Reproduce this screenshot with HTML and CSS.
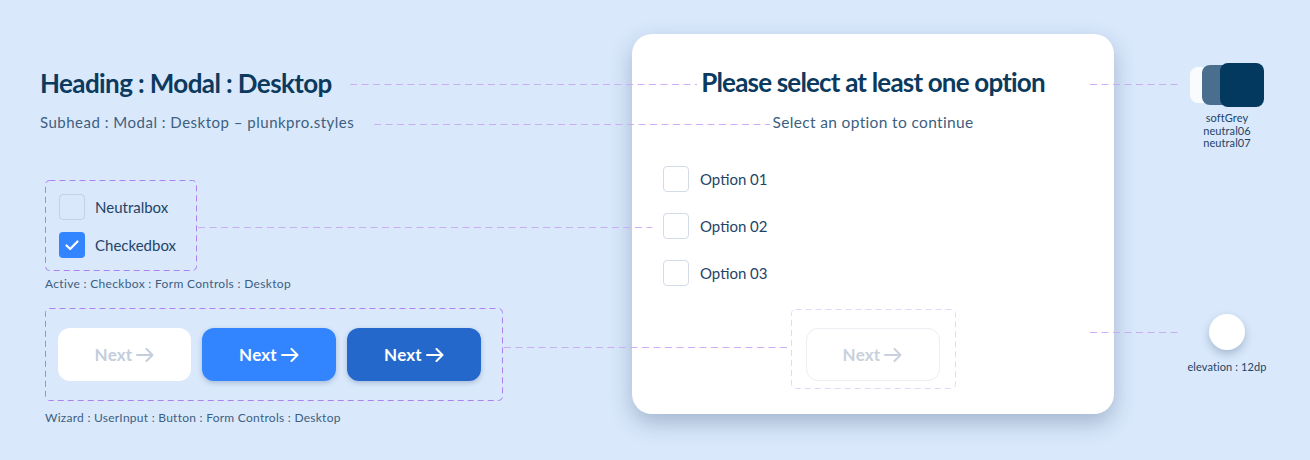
FILE: index.html
```html
<!DOCTYPE html>
<html lang="en">
<head>
<meta charset="utf-8">
<title>Modal : Desktop</title>
<link rel="stylesheet" href="styles.css">
</head>
<body>
<div class="canvas">
  <section class="left">
    <h1 class="heading">Heading : Modal : Desktop</h1>
    <p class="subhead">Subhead : Modal : Desktop – plunkpro.styles</p>

    <div class="group group-checks">
      <svg class="frame" width="152" height="91"><rect x="0.5" y="0.5" width="151" height="90" rx="4"/></svg>
      <div class="check-row"><span class="box"></span><span class="check-label">Neutralbox</span></div>
      <div class="check-row"><span class="box box-checked"><svg width="26" height="26" viewBox="0 0 26 26"><polyline points="7.5,13.5 11.2,17 18.5,9.5"/></svg></span><span class="check-label">Checkedbox</span></div>
    </div>
    <p class="caption caption-checks">Active : Checkbox : Form Controls : Desktop</p>

    <div class="group group-buttons">
      <svg class="frame" width="458" height="93"><rect x="0.5" y="0.5" width="457" height="92" rx="4"/></svg>
      <button class="btn btn-disabled">Next<svg class="arrow" width="18" height="14" viewBox="0 0 18 14"><path d="M1 7H16.5M10.5 1L16.5 7L10.5 13"/></svg></button>
      <button class="btn btn-primary">Next<svg class="arrow" width="18" height="14" viewBox="0 0 18 14"><path d="M1 7H16.5M10.5 1L16.5 7L10.5 13"/></svg></button>
      <button class="btn btn-pressed">Next<svg class="arrow" width="18" height="14" viewBox="0 0 18 14"><path d="M1 7H16.5M10.5 1L16.5 7L10.5 13"/></svg></button>
    </div>
    <p class="caption caption-buttons">Wizard : UserInput : Button : Form Controls : Desktop</p>
  </section>

  <section class="modal">
    <h2 class="modal-title">Please select at least one option</h2>
    <p class="modal-sub">Select an option to continue</p>
    <ul class="options">
      <li class="option"><span class="box box-light"></span><span class="option-label">Option 01</span></li>
      <li class="option"><span class="box box-light"></span><span class="option-label">Option 02</span></li>
      <li class="option"><span class="box box-light"></span><span class="option-label">Option 03</span></li>
    </ul>
    <div class="group group-faint">
      <svg class="frame frame-faint" width="165" height="80"><rect x="0.5" y="0.5" width="164" height="79" rx="4"/></svg>
      <button class="btn btn-ghost">Next<svg class="arrow" width="18" height="14" viewBox="0 0 18 14"><path d="M1 7H16.5M10.5 1L16.5 7L10.5 13"/></svg></button>
    </div>
  </section>

  <section class="right">
    <div class="swatches">
      <span class="swatch swatch-soft"></span>
      <span class="swatch swatch-n06"></span>
      <span class="swatch swatch-n07"></span>
    </div>
    <p class="tokens">softGrey<br>neutral06<br>neutral07</p>
    <span class="elevation"></span>
    <p class="tokens tokens-elev">elevation : 12dp</p>
  </section>

  <svg class="connectors" width="1310" height="460">
    <line x1="350" y1="84.5" x2="697" y2="84.5"/>
    <line x1="1090" y1="84.5" x2="1178" y2="84.5"/>
    <line x1="374" y1="124.5" x2="770" y2="124.5"/>
    <line x1="198" y1="227.5" x2="652" y2="227.5"/>
    <line x1="504" y1="347.5" x2="791" y2="347.5"/>
    <line x1="1090" y1="332.5" x2="1178" y2="332.5"/>
  </svg>
</div>
</body>
</html>
```

FILE: styles.css
```css
* { box-sizing: border-box; }

body {
  margin: 0;
  background: #d9e8fb;
  font-family: Lato, "Noto Sans", sans-serif;
  color: #0c3a5f;
}

.canvas {
  position: relative;
  width: 1310px;
  height: 460px;
  display: flex;
  overflow: hidden;
}

/* ---------- left column ---------- */
.left {
  width: 632px;
  padding: 69px 0 0 40px;
}

.heading {
  margin: 0;
  font-size: 26px;
  line-height: 28px;
  font-weight: 700;
  letter-spacing: -0.6px;
  color: #0b3a5e;
}

.subhead {
  margin: 16px 0 0;
  font-size: 15px;
  line-height: 18px;
  letter-spacing: 0.5px;
  color: #3d5f80;
}

.group { position: relative; }

.frame {
  position: absolute;
  left: 0;
  top: 0;
  pointer-events: none;
}
.frame rect {
  fill: none;
  stroke: #ad82f0;
  stroke-width: 1;
  stroke-dasharray: 6 4;
}
.frame-faint rect { stroke: #e4d6fb; }

.group-checks {
  margin: 49px 0 0 5px;
  width: 152px;
  height: 91px;
  padding: 14px 0 0 14px;
  display: flex;
  flex-direction: column;
  gap: 12px;
}

.check-row {
  display: flex;
  align-items: center;
  gap: 10px;
  height: 26px;
}

.box {
  flex: none;
  width: 26px;
  height: 26px;
  border: 1px solid #c5d2e3;
  border-radius: 4px;
}
.box-checked {
  border: none;
  background: #3385ff;
}
.box-checked svg { display: block; }
.box-checked polyline {
  fill: none;
  stroke: #fff;
  stroke-width: 2.2;
  stroke-linecap: round;
  stroke-linejoin: round;
}
.box-light { border-color: #d3dbe6; background: #fff; }

.check-label {
  font-size: 15px;
  color: #1f4466;
}

.caption {
  margin: 0;
  font-size: 12px;
  line-height: 16px;
  letter-spacing: 0.32px;
  color: #3d5f80;
}
.caption-checks { margin-top: 5px; margin-left: 5px; }
.caption-buttons { margin-top: 9px; margin-left: 5px; letter-spacing: 0.26px; }

.group-buttons {
  margin: 16px 0 0 5px;
  width: 458px;
  height: 93px;
  padding: 20px 0 0 13px;
  display: flex;
  gap: 11px;
  align-items: flex-start;
}

.btn {
  width: 134px;
  height: 53px;
  border: none;
  border-radius: 12px;
  font-family: inherit;
  font-size: 17px;
  font-weight: 700;
  letter-spacing: 0.2px;
  display: flex;
  align-items: center;
  justify-content: center;
  gap: 4px;
  padding: 0;
}
.arrow path {
  fill: none;
  stroke: currentColor;
  stroke-width: 2;
  stroke-linecap: round;
  stroke-linejoin: round;
}
.btn-disabled { background: #fff; color: #c3cedb; width: 133px; }
.btn-primary {
  background: #3385ff;
  color: #fff;
  box-shadow: 0 2px 5px rgba(20, 60, 120, 0.25);
}
.btn-pressed {
  background: #2468cc;
  color: #fff;
  box-shadow: 0 2px 5px rgba(20, 60, 120, 0.25);
}
.btn-ghost {
  background: #fff;
  color: #c8d1dc;
  border: 1px solid #eceef3;
}

/* ---------- modal ---------- */
.modal {
  flex: none;
  margin-top: 34px;
  width: 482px;
  height: 380px;
  background: #fff;
  border-radius: 20px;
  box-shadow: 0 9px 22px rgba(40, 70, 110, 0.3);
  padding-top: 33px;
  display: flex;
  flex-direction: column;
  align-items: center;
}

.modal-title {
  margin: 0;
  font-size: 26px;
  line-height: 30px;
  font-weight: 700;
  letter-spacing: -0.82px;
  color: #0b3a5e;
}

.modal-sub {
  margin: 15px 0 0;
  font-size: 15.5px;
  line-height: 20px;
  letter-spacing: 0.35px;
  color: #3d5f80;
}

.options {
  list-style: none;
  margin: 34px 0 0;
  padding: 0 0 0 31px;
  align-self: stretch;
  display: flex;
  flex-direction: column;
  gap: 21px;
}

.option {
  display: flex;
  align-items: center;
  gap: 11px;
  height: 26px;
}

.option-label {
  font-size: 15px;
  color: #1f4466;
}

.group-faint {
  margin-top: 23px;
  width: 165px;
  height: 80px;
  padding: 19px 0 0 15px;
}

/* ---------- right column ---------- */
.right {
  flex: none;
  width: 166px;
  margin-left: 30px;
  display: flex;
  flex-direction: column;
  align-items: center;
}

.swatches {
  margin-top: 63px;
  height: 44px;
  display: flex;
  align-items: center;
}

.swatch {
  display: block;
  border-radius: 8px;
}
.swatch-soft { width: 36px; height: 36px; background: #f9fbfd; }
.swatch-n06 { width: 40px; height: 40px; background: #4a6e8e; margin-left: -24px; }
.swatch-n07 { width: 44px; height: 44px; background: #03395f; margin-left: -22px; }

.tokens {
  margin: 5px 0 0;
  font-size: 11px;
  line-height: 12.5px;
  letter-spacing: 0.1px;
  text-align: center;
  color: #1f4466;
}

.elevation {
  margin-top: 164px;
  width: 36px;
  height: 36px;
  border-radius: 50%;
  background: #fff;
  box-shadow: 0 4px 9px rgba(20, 50, 90, 0.25);
}

.tokens-elev { margin-top: 11px; }

/* ---------- annotation connectors ---------- */
.connectors {
  position: absolute;
  left: 0;
  top: 0;
  pointer-events: none;
}
.connectors line {
  stroke: #caadf5;
  stroke-width: 1;
  stroke-dasharray: 7 4.5;
}
```
